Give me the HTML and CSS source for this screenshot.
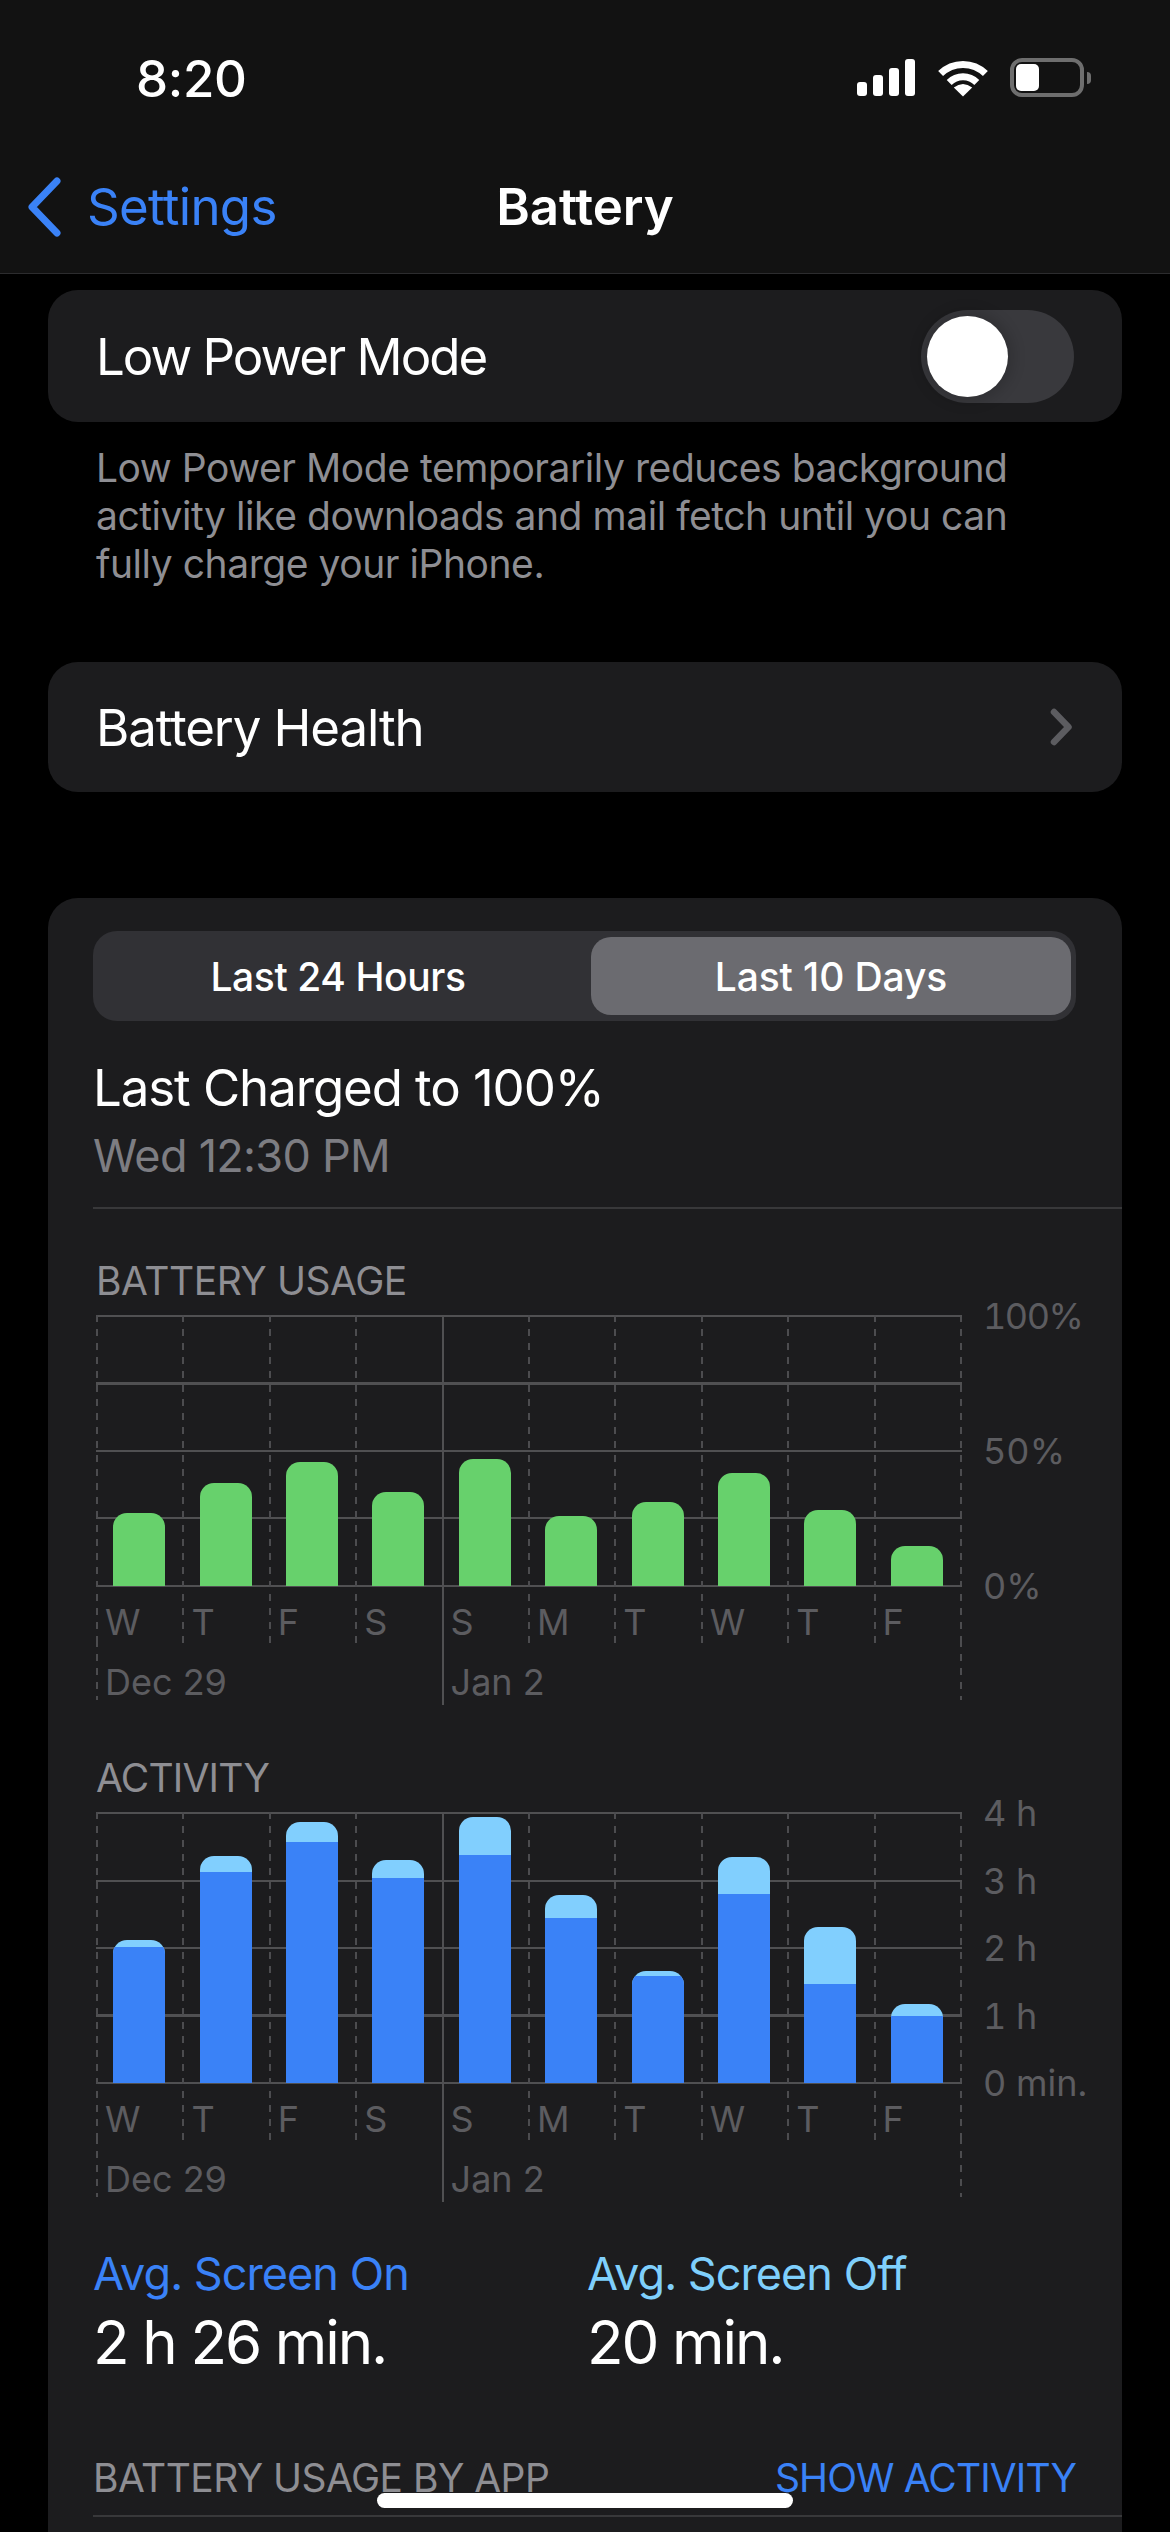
FILE: index.html
```html
<!DOCTYPE html>
<html lang="en">
<head>
<meta charset="utf-8">
<title>Battery</title>
<link rel="stylesheet" href="styles.css">
</head>
<body>
<div class="screen">
  <header class="top">
    <div class="status">
      <span class="time">8:20</span>
      <div class="status-icons">
        <div class="signal"><i class="s1"></i><i class="s2"></i><i class="s3"></i><i class="s4"></i></div>
        <svg class="wifi" width="50" height="38" viewBox="0 0 50 38"><path d="M2.6 14.6A32 32 0 0 1 47.4 14.6M11.2 23.4A19.6 19.6 0 0 1 38.8 23.4" fill="none" stroke="#fff" stroke-width="7"/><path d="M25 37.5 15.8 28.6Q25 21.4 34.2 28.6Z" fill="#fff"/></svg>
        <div class="battery"><div class="battery-level"></div></div>
        <div class="battery-nub"></div>
      </div>
    </div>
    <nav class="nav">
      <div class="back">
        <svg width="36" height="60" viewBox="0 0 36 60"><path d="M31 4 6 30 31 56" fill="none" stroke="#3a82f7" stroke-width="7" stroke-linecap="round" stroke-linejoin="round"/></svg>
        <span>Settings</span>
      </div>
      <h1>Battery</h1>
    </nav>
  </header>

  <main>
    <section class="card row first-card">
      <span>Low Power Mode</span>
      <div class="toggle"><div class="knob"></div></div>
    </section>
    <p class="note">Low Power Mode temporarily reduces background<br>activity like downloads and mail fetch until you can<br>fully charge your iPhone.</p>

    <section class="card row health">
      <span>Battery Health</span>
      <svg width="24" height="40" viewBox="0 0 24 40"><path d="M4 5 18.5 20 4 35" fill="none" stroke="#5c5c60" stroke-width="6.5" stroke-linecap="round" stroke-linejoin="round"/></svg>
    </section>

    <section class="card usage">
      <div class="segments">
        <div class="seg">Last 24 Hours</div>
        <div class="seg active">Last 10 Days</div>
      </div>
      <div class="charged">Last Charged to 100%</div>
      <div class="charged-when">Wed 12:30 PM</div>
      <div class="rule"></div>

      <h2 class="caption">BATTERY USAGE</h2>
      <div class="chart">
        <div class="plot">
          <div class="col"><div class="bar green" style="height:73px"></div></div>
          <div class="col"><div class="bar green" style="height:103px"></div></div>
          <div class="col"><div class="bar green" style="height:124px"></div></div>
          <div class="col"><div class="bar green" style="height:94px"></div></div>
          <div class="col major"><div class="bar green" style="height:127px"></div></div>
          <div class="col"><div class="bar green" style="height:70px"></div></div>
          <div class="col"><div class="bar green" style="height:84px"></div></div>
          <div class="col"><div class="bar green" style="height:113px"></div></div>
          <div class="col"><div class="bar green" style="height:76px"></div></div>
          <div class="col"><div class="bar green" style="height:40px"></div></div>
        </div>
        <div class="axis"><span class="tight">100%</span><span>50%</span><span>0%</span></div>
        <div class="days">
          <span>W</span><span>T</span><span>F</span><span>S</span><span class="major">S</span><span>M</span><span>T</span><span>W</span><span>T</span><span>F</span>
        </div>
        <div class="dates">
          <span class="d1">Dec 29</span><span class="d2">Jan 2</span>
        </div>
      </div>

      <h2 class="caption activity-caption">ACTIVITY</h2>
      <div class="chart">
        <div class="plot">
          <div class="col"><div class="bar light" style="height:143px"><div class="dark" style="height:136px"></div></div></div>
          <div class="col"><div class="bar light" style="height:227px"><div class="dark" style="height:211px"></div></div></div>
          <div class="col"><div class="bar light" style="height:261px"><div class="dark" style="height:241px"></div></div></div>
          <div class="col"><div class="bar light" style="height:223px"><div class="dark" style="height:205px"></div></div></div>
          <div class="col major"><div class="bar light" style="height:266px"><div class="dark" style="height:228px"></div></div></div>
          <div class="col"><div class="bar light" style="height:188px"><div class="dark" style="height:165px"></div></div></div>
          <div class="col"><div class="bar light" style="height:112px"><div class="dark" style="height:107px"></div></div></div>
          <div class="col"><div class="bar light" style="height:226px"><div class="dark" style="height:189px"></div></div></div>
          <div class="col"><div class="bar light" style="height:156px"><div class="dark" style="height:99px"></div></div></div>
          <div class="col"><div class="bar light" style="height:79px"><div class="dark" style="height:67px"></div></div></div>
        </div>
        <div class="axis"><span>4 h</span><span>3 h</span><span>2 h</span><span>1 h</span><span>0 min.</span></div>
        <div class="days">
          <span>W</span><span>T</span><span>F</span><span>S</span><span class="major">S</span><span>M</span><span>T</span><span>W</span><span>T</span><span>F</span>
        </div>
        <div class="dates">
          <span class="d1">Dec 29</span><span class="d2">Jan 2</span>
        </div>
      </div>

      <div class="averages">
        <div>
          <div class="avg-label on">Avg. Screen On</div>
          <div class="avg-value">2 h 26 min.</div>
        </div>
        <div>
          <div class="avg-label off">Avg. Screen Off</div>
          <div class="avg-value">20 min.</div>
        </div>
      </div>

      <div class="by-app">
        <span>BATTERY USAGE BY APP</span>
        <span class="show">SHOW ACTIVITY</span>
      </div>
      <div class="rule full"></div>
    </section>
  </main>

  <div class="home-bar"></div>
</div>
</body>
</html>
```

FILE: styles.css
```css
* { box-sizing: border-box; }
html, body { margin: 0; padding: 0; background: #000; }
body {
  width: 1170px;
  height: 2532px;
  overflow: hidden;
  font-family: Inter, "Liberation Sans", sans-serif;
  color: #fff;
}
.screen { position: relative; height: 2532px; overflow: hidden; }

/* top bar */
.top {
  height: 274px;
  background: #121212;
  border-bottom: 1px solid #2c2c2e;
}
.status {
  height: 153px;
  padding: 53px 79px 0 136px;
  display: flex;
  justify-content: space-between;
  align-items: flex-start;
}
.time { font-size: 51px; line-height: 52px; font-weight: 500; letter-spacing: -0.3px; }
.status-icons { display: flex; align-items: center; margin-top: 5px; height: 39px; }
.signal { display: flex; align-items: flex-end; gap: 6px; height: 37px; }
.signal i { display: block; width: 10px; background: #fff; border-radius: 3px; }
.s1 { height: 14px; }
.s2 { height: 21px; }
.s3 { height: 28px; }
.s4 { height: 37px; }
.wifi { margin-left: 23px; }
.battery {
  margin-left: 22px;
  width: 74px;
  height: 39px;
  border: 4px solid #6e6e6e;
  border-radius: 12px;
  padding: 2px;
}
.battery-level { width: 23px; height: 27px; background: #fff; border-radius: 5px; }
.battery-nub {
  margin-left: 3px;
  width: 4px;
  height: 12px;
  background: #6e6e6e;
  border-radius: 0 6px 6px 0;
}
.nav {
  display: grid;
  grid-template-columns: 1fr auto 1fr;
  align-items: center;
  height: 60px;
  margin-top: 23px;
  font-size: 51px;
}
.back { display: flex; align-items: center; gap: 25px; padding-left: 26px; color: #3a82f7; letter-spacing: -0.7px; }
.nav h1 { margin: 0; font-size: 51px; font-weight: 600; letter-spacing: -0.1px; }

/* cards */
main { display: block; padding: 0 48px; }
.card { background: #1c1c1e; border-radius: 30px; }
.row {
  display: flex;
  justify-content: space-between;
  align-items: center;
  font-size: 51px;
}
.first-card { height: 132px; margin-top: 16px; padding: 0 48px; letter-spacing: -2px; }
.toggle {
  width: 153px;
  height: 93px;
  border-radius: 47px;
  background: #39393d;
  padding: 6px;
}
.knob { width: 81px; height: 81px; border-radius: 50%; background: #fff; box-shadow: 0 0 14px 5px rgba(0, 0, 0, .16); }
.note {
  margin: 22px 0 0;
  padding: 0 48px;
  font-size: 39px;
  line-height: 48px;
  color: #8e8e93;
  letter-spacing: -0.45px;
}
.health { height: 130px; margin-top: 74px; padding: 0 48px; letter-spacing: -1.1px; }

.usage {
  margin-top: 106px;
  padding: 33px 46px 0 45px;
  height: 1700px;
  border-radius: 30px 30px 0 0;
}
.segments {
  display: grid;
  grid-template-columns: 480px 480px;
  column-gap: 13px;
  height: 90px;
  padding: 6px 5px;
  background: #313135;
  border-radius: 24px;
  font-size: 39px;
  font-weight: 500;
  letter-spacing: -0.4px;
}
.seg { display: flex; align-items: center; justify-content: center; height: 78px; border-radius: 20px; }
.seg.active { background: #6b6b70; letter-spacing: -0.1px; }
.charged { margin-top: 37px; font-size: 51px; line-height: 60px; letter-spacing: -1.1px; }
.charged-when { margin-top: 11px; font-size: 45px; line-height: 54px; color: #7d7d82; letter-spacing: -0.7px; }
.rule { height: 2px; margin: 24px -46px 0 0; background: #38383a; }

.caption {
  margin: 49px 0 11px 3px;
  font-size: 39px;
  line-height: 46px;
  font-weight: 400;
  color: #8e8e93;
  letter-spacing: -0.45px;
}
.activity-caption { margin-top: 50px; letter-spacing: -0.8px; }

/* charts */
.chart {
  display: grid;
  grid-template-columns: 866px auto;
  margin-left: 3px;
}
.plot {
  grid-column: 1;
  display: grid;
  grid-template-columns: repeat(10, 86.4px);
  height: 272px;
  background:
    repeating-linear-gradient(to bottom, #505052 0 2px, transparent 2px 67.5px),
    repeating-linear-gradient(to bottom, #4c4c4f 0 7px, transparent 7px 14px) right top / 2px 100% no-repeat;
}
.col {
  display: flex;
  align-items: flex-end;
  justify-content: center;
  padding-bottom: 1px;
  background: repeating-linear-gradient(to bottom, #4c4c4f 0 7px, transparent 7px 14px) left top / 2px 100% no-repeat;
}
.col.major { background: linear-gradient(#505052, #505052) left top / 2px 100% no-repeat; }
.bar {
  width: 52px;
  border-radius: 14px 14px 0 0;
  overflow: hidden;
  display: flex;
  align-items: flex-end;
}
.green { background: #67d16c; }
.light { background: #81cffe; }
.dark { width: 100%; background: #3a82f7; }

.axis {
  grid-column: 2;
  grid-row: 1;
  display: flex;
  flex-direction: column;
  justify-content: space-between;
  height: 272px;
  padding: 1px 0 1px 21px;
  font-size: 36px;
  line-height: 0;
  color: #5c5c60;
  white-space: nowrap;
  font-variant-numeric: tabular-nums;
}
.axis span { display: block; height: 0; }
.axis .tight { letter-spacing: -1.5px; }

.days {
  grid-column: 1;
  display: grid;
  grid-template-columns: repeat(10, 86.4px);
  height: 53px;
  font-size: 36px;
  line-height: 44px;
  color: #5c5c60;
  background: repeating-linear-gradient(to bottom, transparent 0 7px, #4c4c4f 7px 14px) right top / 2px 100% no-repeat;
}
.days span {
  padding: 13px 0 0 9px;
  background: repeating-linear-gradient(to bottom, transparent 0 7px, #4c4c4f 7px 14px) left top / 2px 100% no-repeat;
}
.days .major { background: linear-gradient(#505052, #505052) left top / 2px 100% no-repeat; }

.dates {
  grid-column: 1;
  display: grid;
  grid-template-columns: 345.6px 1fr;
  height: 65px;
  font-size: 36px;
  line-height: 44px;
  color: #5c5c60;
  background: repeating-linear-gradient(to bottom, #4c4c4f 0 7px, transparent 7px 14px) right top / 2px 60px no-repeat;
}
.dates span { padding: 20px 0 0 9px; }
.d1 { background: repeating-linear-gradient(to bottom, #4c4c4f 0 7px, transparent 7px 14px) left top / 2px 60px no-repeat; }
.d2 { background: linear-gradient(#505052, #505052) left top / 2px 100% no-repeat; }

/* averages */
.averages {
  display: grid;
  grid-template-columns: 494px 1fr;
  margin-top: 45px;
}
.avg-label { font-size: 45px; line-height: 54px; letter-spacing: -0.95px; }
.on { color: #3a82f7; }
.off { color: #7fcffc; }
.avg-value { margin-top: 6px; font-size: 60px; line-height: 70px; letter-spacing: -2.1px; }

.by-app {
  display: flex;
  justify-content: space-between;
  margin-top: 78px;
  font-size: 39px;
  line-height: 46px;
  color: #8e8e93;
  letter-spacing: -0.55px;
}
.show { color: #3a82f7; letter-spacing: -0.9px; }
.rule.full { margin-top: 14px; }

.home-bar {
  position: absolute;
  left: 377px;
  top: 2493px;
  width: 416px;
  height: 15px;
  border-radius: 8px;
  background: #fff;
}
```
